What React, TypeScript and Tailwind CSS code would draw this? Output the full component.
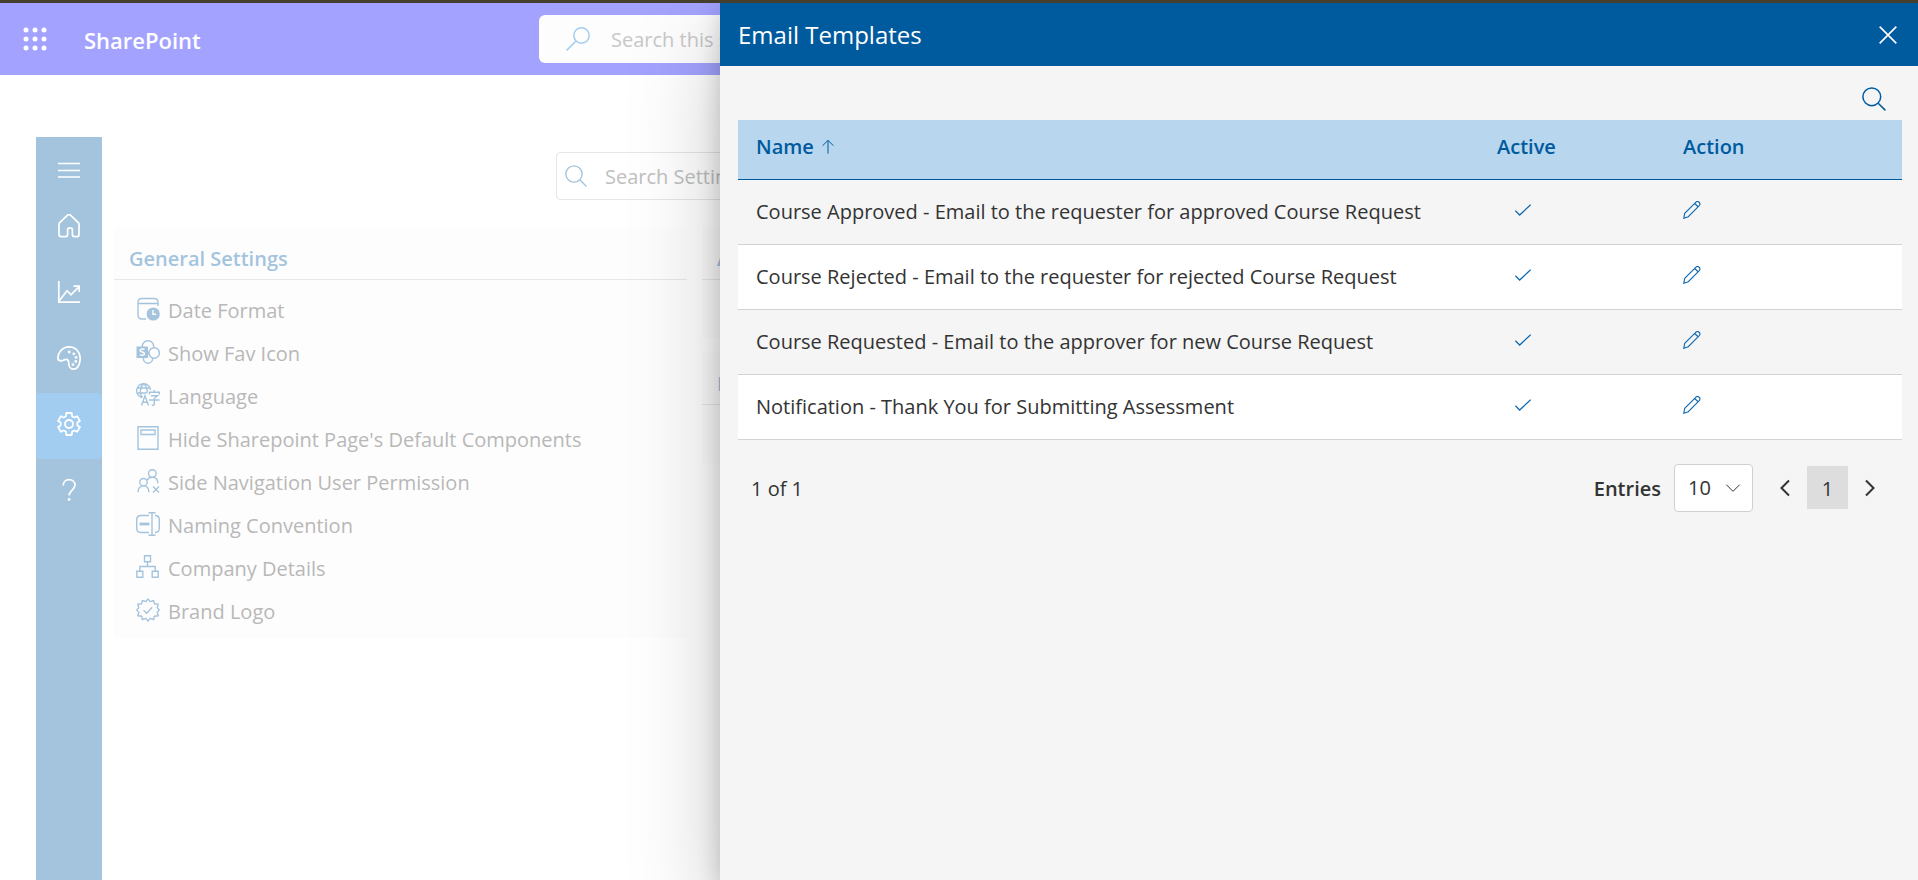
import type { ReactNode } from "react";

interface IconProps {
  size?: number;
  className?: string;
  strokeWidth?: number;
  children: ReactNode;
}

function Icon({ size = 24, className, strokeWidth = 1.4, children }: IconProps) {
  return (
    <svg
      width={size}
      height={size}
      viewBox="0 0 24 24"
      fill="none"
      stroke="currentColor"
      strokeWidth={strokeWidth}
      className={className}
      aria-hidden="true"
    >
      {children}
    </svg>
  );
}

const SearchIcon = ({ size = 24, className }: { size?: number; className?: string }) => (
  <Icon size={size} className={className} strokeWidth={1.5}>
    <circle cx="9.8" cy="9.8" r="8.9" />
    <path d="M16.2 16.2l7.2 7.2" />
  </Icon>
);

const SIDE_ITEMS = [
  {
    id: "home",
    label: "Home",
    icon: (
      <Icon strokeWidth={1.7}>
        <path d="M2 10.2c0-.6.3-1.2.7-1.6l7.6-7.3c1-.9 2.400-.9 3.400 0l7.600 7.300c.4.4.7 1 .7 1.600V20.600c0 1.200-.9 2-2 2h-2.600c-1.100 0-2-.8-2-2v-5.200c0-.8-.5-1.300-1.200-1.300h-2.400c-.7 0-1.200.5-1.200 1.300V20.600c0 1.200-.9 2-2 2H4c-1.100 0-2-.8-2-2z" />
      </Icon>
    ),
  },
  {
    id: "reports",
    label: "Reports",
    icon: (
      <Icon strokeWidth={1.7}>
        <path d="M1.800 1v21.200H23M2.500 20.500l7.500-9.800 4 4.200 8-8.200M16.500 6.200h5.700V12" />
      </Icon>
    ),
  },
  {
    id: "theme",
    label: "Theme",
    icon: (
      <Icon strokeWidth={1.7}>
        <path d="M1 13C.4 6.500 5.500.9 12.200.9 18.700.9 23.200 6 23.200 12.300c0 6-2.600 10.800-6.700 10.800-3 0-4.700-2.400-4.700-5.300 0-2.800-.6-4.500-2.600-4.500-2 0-2.600 1.500-4.800 1.500C2.600 14.800 1.200 14.300 1 13z" />
        <g fill="currentColor" stroke="none">
          <circle cx="12.2" cy="6" r="1.4" />
          <circle cx="16.8" cy="7.8" r="1.4" />
          <circle cx="19" cy="11.4" r="1.4" />
          <circle cx="18.8" cy="15.4" r="1.4" />
          <circle cx="16" cy="18.6" r="1.4" />
        </g>
      </Icon>
    ),
  },
  {
    id: "settings",
    label: "Settings",
    icon: (
      <Icon strokeWidth={1.8}>
        <circle cx="12" cy="12" r="4" />
        <path
          strokeLinejoin="round"
          d="M9.300 1h5.400l.4 3.200q1.200.9 2.300 1.300l2.700-1.300 2.800 4.700-2.500 1.700q-.3 1.400 0 2.800l2.500 1.700-2.800 4.700-2.700-1.300q-1.100.4-2.300 1.300l-.4 3.200H9.300l-.4-3.200q-1.200-.9-2.300-1.300l-2.700 1.300-2.800-4.700 2.500-1.700q.3-1.400 0-2.800L1.100 8.900l2.800-4.700 2.700 1.300q1.100-.4 2.300-1.300z"
        />
      </Icon>
    ),
  },
  {
    id: "help",
    label: "Help",
    icon: (
      <Icon strokeWidth={1.7}>
        <path d="M6.200 7.500C6.200 4 8.600 1.600 12 1.600s6 2.300 6 5.500c0 4.700-5.900 5.200-5.900 10.400" />
        <circle cx="12.1" cy="21.5" r="1.4" fill="currentColor" stroke="none" />
      </Icon>
    ),
  },
];

const GENERAL_SETTINGS = [
  {
    name: "Date Format",
    icon: (
      <Icon>
        <path d="M10 22H6c-2.500 0-4-1.500-4-4V5.500C2 3 3.500 1.500 6 1.500h12c2.500 0 4 1.500 4 4V9M2 6.500h20" />
        <circle cx="17.2" cy="17" r="6.6" fill="currentColor" stroke="none" />
        <path d="M17 13v4.200h3.200" stroke="#fdfdfd" />
      </Icon>
    ),
  },
  {
    name: "Show Fav Icon",
    icon: (
      <Icon>
        <circle cx="12" cy="18.6" r="4.6" />
        <circle cx="12" cy="6.6" r="5.8" fill="#fdfdfd" />
        <circle cx="18.2" cy="13" r="5.200" fill="#fdfdfd" />
        <rect x="0.500" y="6.500" width="11.500" height="11.500" fill="currentColor" stroke="none" />
        <path
          d="M8.500 9.500c-1.200-.9-4.300-.8-4.300.9 0 2 4.300 1.200 4.300 3.300 0 1.900-3.200 1.800-4.600.9"
          stroke="#fdfdfd"
          strokeWidth="1.6"
        />
      </Icon>
    ),
  },
  {
    name: "Language",
    icon: (
      <Icon>
        <path d="M6 14.500A7 7 0 1 1 14.600 7M.9 5h13M.9 10h9.500M7.600.8C3.500 4.500 3.500 11 6.500 14.500M7.600.8C10.500 3 11.500 6.500 11 10" />
        <path d="M5.500 22.500L9 12.800l3.500 9.700M6.700 19.300h4.600" />
        <path d="M13.500 11.500V9.300h9.800v2.200M18.200 7v2.300M15 12.800h6.500l-3.200 2.700v5.700c0 .8-.4 1-1.200 1h-1.300M13 17h10.600" />
      </Icon>
    ),
  },
  {
    name: "Hide Sharepoint Page's Default Components",
    icon: (
      <Icon>
        <path d="M2 .8h20v22.400H2zM5 4h14v4.500H5z" />
      </Icon>
    ),
  },
  {
    name: "Side Navigation User Permission",
    icon: (
      <Icon>
        <circle cx="16.3" cy="4.5" r="3.8" />
        <circle cx="7.5" cy="13.2" r="3.7" />
        <path d="M2 23.200c.2-3.700 2.300-6.300 5.500-6.300s5.300 2.600 5.500 6.300M11.200 11c1-1.700 2.900-2.700 5.100-2.700 3.100 0 5.400 2.400 5.600 6M17 17.500l6 6M23 17.500l-6 6" />
      </Icon>
    ),
  },
  {
    name: "Naming Convention",
    icon: (
      <Icon>
        <path d="M13 3.500H5c-2.700 0-4.300 1.600-4.300 4.200v8.600c0 2.600 1.600 4.200 4.300 4.200h8M19 3.500c2.700 0 4.300 1.600 4.300 4.200v8.600c0 2.600-1.600 4.200-4.300 4.200M16 .8v22.400M12.500.8h7M12.500 23.200h7" />
        <path d="M3.500 12h10" strokeWidth="2.8" />
      </Icon>
    ),
  },
  {
    name: "Company Details",
    icon: (
      <Icon>
        <path d="M8.500.8h6v6h-6zM.8 16.300h6v6h-6zM16.200 16.300h6v6h-6zM11.500 6.800v4.700M3.800 16.300v-4.800h15.400v4.800" />
      </Icon>
    ),
  },
  {
    name: "Brand Logo",
    icon: (
      <Icon>
        <path
          strokeLinejoin="round"
          d="M12 .9l2.100 2.700 3.500-1.100.8 3.300 3.800.4-1 3.400 2 2.400-2 2.400 1 3.400-3.800.4-.8 3.300-3.500-1.100L12 23.100l-2.100-2.700-3.500 1.100-.8-3.300-3.800-.4 1-3.400-2-2.400 2-2.400-1-3.400 3.800-.4.8-3.300 3.500 1.100z"
        />
        <path d="M7.500 12.300l3.200 3 5.500-6" />
      </Icon>
    ),
  },
];

const TEMPLATES = [
  "Course Approved - Email to the requester for approved Course Request",
  "Course Rejected - Email to the requester for rejected Course Request",
  "Course Requested - Email to the approver for new Course Request",
  "Notification - Thank You for Submitting Assessment",
];

function SuiteHeader() {
  return (
    <header className="flex h-[72px] items-center bg-[#a3a3ff]">
      <div className="flex w-[539px] shrink-0 items-center">
        <button type="button" aria-label="App launcher" className="ml-[22px] text-white">
          <svg width="26" height="26" viewBox="0 0 26 26" fill="currentColor" aria-hidden="true">
            {[4, 13, 22].map((y) =>
              [4, 13, 22].map((x) => <circle key={`${x}-${y}`} cx={x} cy={y} r="2.5" />)
            )}
          </svg>
        </button>
        <a href="#" className="ml-9 pt-0.5 text-[22px] leading-8 font-semibold text-white">
          SharePoint
        </a>
      </div>
      <label className="flex h-12 w-[840px] items-center rounded-md bg-[#fdfdfd]">
        <Icon strokeWidth={1.5} className="ml-[27px] shrink-0 text-[#a3cdf0]">
          <circle cx="15.5" cy="8.5" r="7.7" />
          <path d="M9.800 14.200L.6 23.400" />
        </Icon>
        <input
          type="search"
          aria-label="Search this site"
          placeholder="Search this site"
          className="ml-[21px] w-full pt-0.5 text-[20px] outline-none placeholder:text-[#c8c8c8]"
        />
      </label>
    </header>
  );
}

function Sidebar() {
  return (
    <nav className="flex w-[66px] shrink-0 flex-col bg-[#a4c4de] text-white">
      <button type="button" aria-label="Menu" className="flex h-[58px] items-center justify-center pt-2">
        <Icon strokeWidth={1.5}>
          <path d="M1 5.500h22M1 12.500h22M1 19h22" />
        </Icon>
      </button>
      {SIDE_ITEMS.map((item) => (
        <a
          key={item.id}
          href="#"
          aria-label={item.label}
          className={`flex h-[66px] items-center justify-center pb-1 ${
            item.id === "settings" ? "rounded-sm bg-[#a3cdf0]" : ""
          }`}
        >
          {item.icon}
        </a>
      ))}
    </nav>
  );
}

function SettingsCard({ title, children }: { title: string; children?: ReactNode }) {
  return (
    <section className="bg-[#fdfdfd]">
      <h2 className="h-[52px] border-b border-[#e8e8e8] px-[15px] pt-4 text-[20px] leading-[30px] font-semibold text-[#a4c4de]">
        {title}
      </h2>
      {children ?? <div className="h-[58px]" />}
    </section>
  );
}

function EmailTemplatesPanel() {
  return (
    <aside
      role="dialog"
      aria-label="Email Templates"
      className="absolute inset-y-0 right-0 left-[720px] bg-[#f5f5f5] text-[#333333] shadow-[0_38px_86px_rgba(0,0,0,0.22),0_7px_22px_rgba(0,0,0,0.18)]"
    >
      <div className="flex h-[63px] items-center justify-between bg-[#005a9e] pr-5 pl-[18px] text-white">
        <h1 className="text-[24px] leading-8">Email Templates</h1>
        <button type="button" aria-label="Close">
          <Icon size={20} strokeWidth={2}>
            <path d="M2 2l20 20M22 2L2 22" />
          </Icon>
        </button>
      </div>

      <div className="pr-4 pl-[18px]">
        <div className="flex h-[54px] items-center justify-end pt-3 pr-4">
          <button type="button" aria-label="Search templates" className="text-[#005a9e]">
            <SearchIcon />
          </button>
        </div>

        <table className="w-full border-collapse text-left text-[20px] leading-[30px]">
          <thead>
            <tr className="h-[59px] border-b border-[#005a9e] bg-[#b8d6ee] text-[#005a9e]">
              <th className="pb-1 pl-[18px] font-semibold">
                <span className="flex items-center gap-1.5">
                  Name
                  <Icon size={16} strokeWidth={1.5}>
                    <path d="M12 2v20M4 10l8-8 8 8" />
                  </Icon>
                </span>
              </th>
              <th className="w-[186px] pb-1 pl-[18px] font-semibold">Active</th>
              <th className="w-[237px] pb-1 pl-[18px] font-semibold">Action</th>
            </tr>
          </thead>
          <tbody>
            {TEMPLATES.map((name) => (
              <tr key={name} className="h-[65px] border-b border-[#d6d2d2] even:bg-white">
                <td className="pl-[18px]">{name}</td>
                <td className="pb-1 pl-9 text-[#1068b0]">
                  <Icon size={16} strokeWidth={1.9}>
                    <path d="M.5 13l6.500 6.500L23.500 4" />
                  </Icon>
                </td>
                <td className="pb-1 pl-[18px]">
                  <button type="button" aria-label={`Edit ${name}`} className="block text-[#1068b0]">
                    <Icon size={18} strokeWidth={1.5}>
                      <path d="M1 23l1.300-6.500L17 1.800c1.300-1.300 3.200-1.300 4.500-.1 1.500 1.400 1.500 3.200.2 4.500L7 21zM15.500 3.300L20.200 7.700" />
                    </Icon>
                  </button>
                </td>
              </tr>
            ))}
          </tbody>
        </table>

        <div className="mt-6 flex items-center pr-6 pl-[13px] text-[20px] leading-[30px]">
          <p className="flex-1 pt-0.5">1 of 1</p>
          <label htmlFor="entries" className="mr-[13px] pt-0.5 font-semibold">
            Entries
          </label>
          <div className="relative">
            <select
              id="entries"
              defaultValue="10"
              className="h-12 w-[79px] appearance-none rounded-sm border border-[#d0d0cc] bg-white pl-[13px]"
            >
              <option>10</option>
              <option>20</option>
              <option>50</option>
            </select>
            <Icon size={16} strokeWidth={1.5} className="pointer-events-none absolute top-4 right-3">
              <path d="M2 7l10 10L22 7" />
            </Icon>
          </div>
          <button type="button" aria-label="Previous page" className="ml-6">
            <Icon size={18} strokeWidth={2.7}>
              <path d="M16 2L6 12l10 10" />
            </Icon>
          </button>
          <button type="button" aria-current="page" className="ml-3 h-[43px] w-[41px] bg-[#dddddd] pt-0.5">
            1
          </button>
          <button type="button" aria-label="Next page" className="ml-3">
            <Icon size={18} strokeWidth={2.7}>
              <path d="M8 2l10 10L8 22" />
            </Icon>
          </button>
        </div>
      </div>
    </aside>
  );
}

export default function App() {
  return (
    <div className="flex h-screen flex-col overflow-hidden border-t-[3px] border-[#463f2c] bg-white font-['Open_Sans',sans-serif]">
      <div className="relative flex min-h-0 flex-1 flex-col overflow-hidden">
        <SuiteHeader />
        <div className="mt-[62px] ml-9 flex min-h-0 flex-1">
          <Sidebar />
          <main className="mr-[55px] ml-3 flex-1">
            <label className="mt-[15px] ml-[442px] flex h-12 w-[865px] items-center rounded-sm border border-[#e6e6e6] bg-white">
              <SearchIcon size={22} className="ml-2 shrink-0 text-[#a4c4de]" />
              <input
                type="search"
                aria-label="Search settings"
                placeholder="Search Settings"
                className="ml-[18px] w-full pt-0.5 text-[20px] outline-none placeholder:text-[#c0c0c0]"
              />
            </label>
            <div className="mt-7 grid grid-cols-3 items-start gap-[15px]">
              <SettingsCard title="General Settings">
                <ul className="pt-[9px] pb-[5px]">
                  {GENERAL_SETTINGS.map((item) => (
                    <li key={item.name}>
                      <a href="#" className="flex h-[43px] items-center gap-2 pl-[22px] text-[20px] text-[#b8b8b8]">
                        <span className="pb-1 text-[#a4c4de]">{item.icon}</span>
                        {item.name}
                      </a>
                    </li>
                  ))}
                </ul>
              </SettingsCard>
              <div className="grid gap-[15px]">
                <SettingsCard title="App" />
                <SettingsCard title="Email" />
              </div>
            </div>
          </main>
        </div>
        <EmailTemplatesPanel />
      </div>
    </div>
  );
}
